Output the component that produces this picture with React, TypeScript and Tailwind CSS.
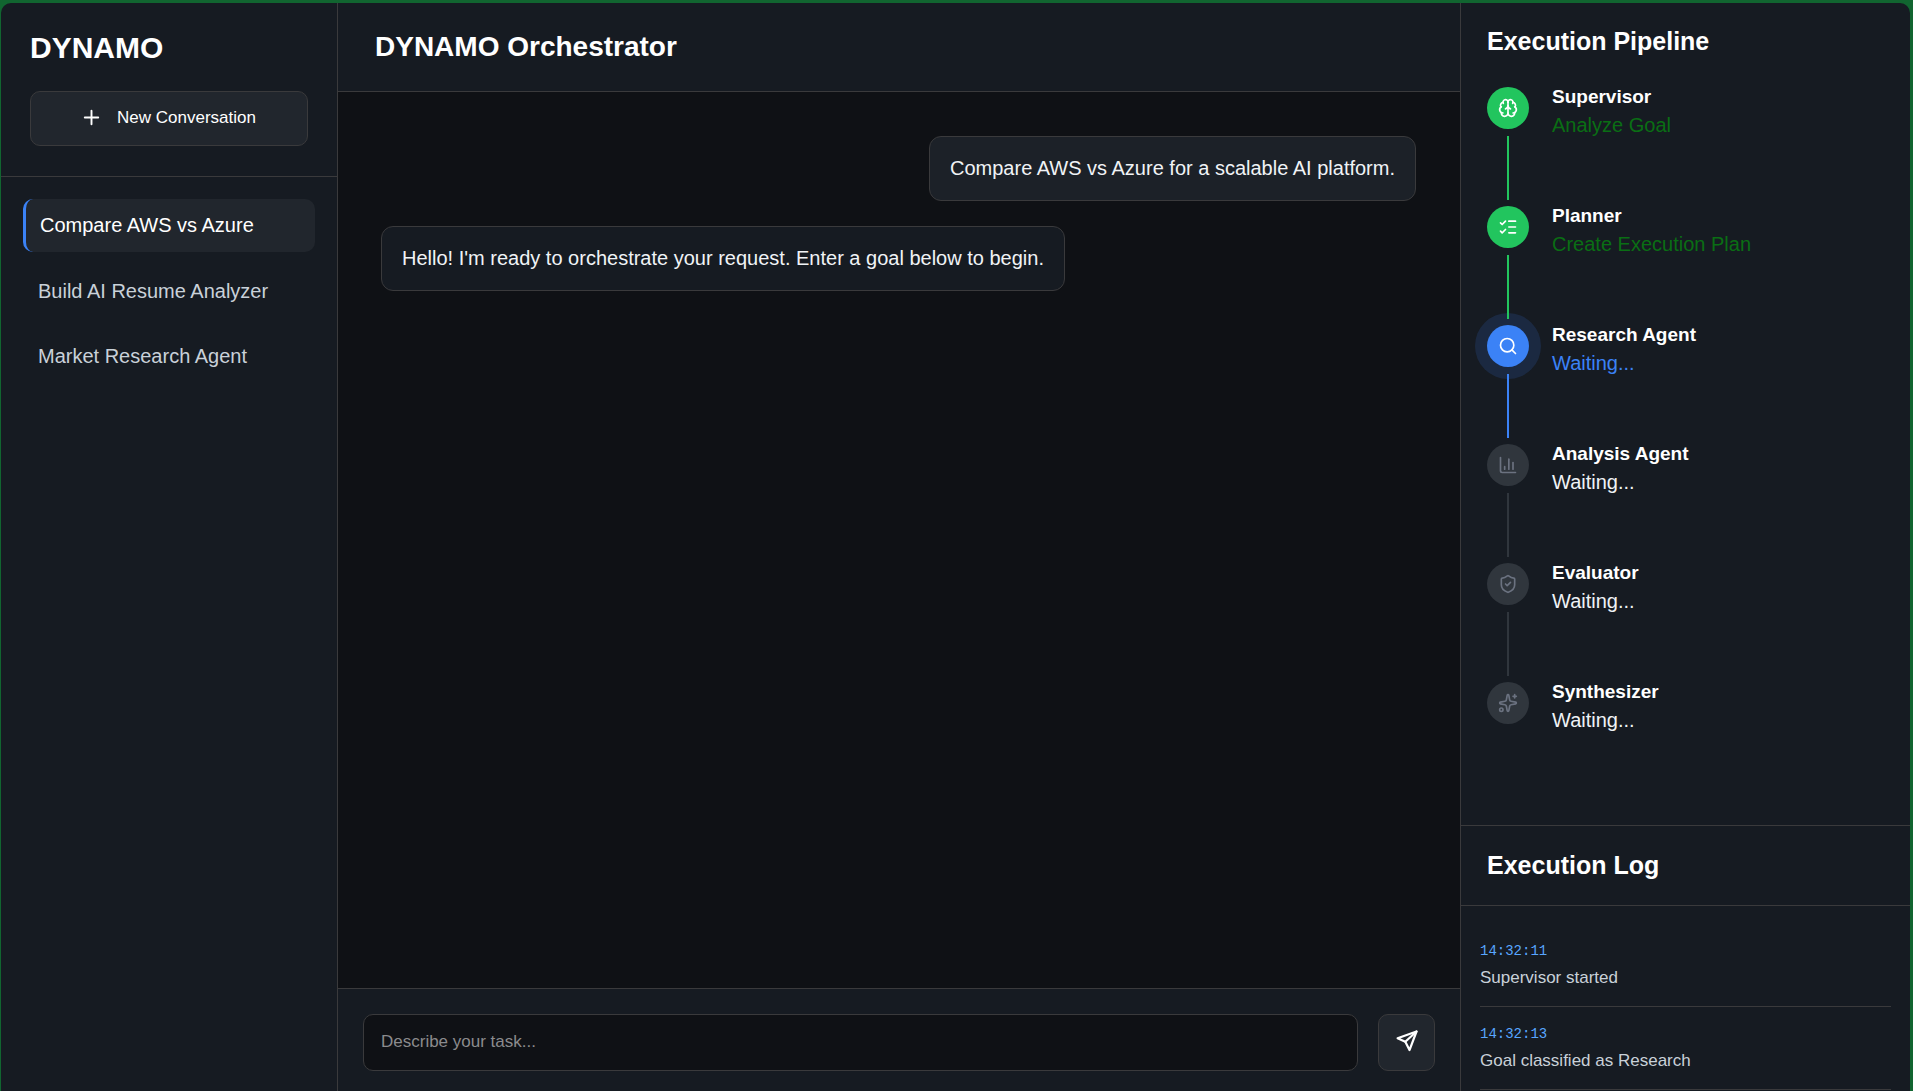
import { Brain, ChartColumn, ListChecks, Plus, Search, ShieldCheck, Sparkles } from "lucide-react";
import type { LucideIcon } from "lucide-react";

const conversations = ["Compare AWS vs Azure", "Build AI Resume Analyzer", "Market Research Agent"];

type State = "done" | "active" | "idle";

const steps: { name: string; status: string; state: State; icon: LucideIcon }[] = [
  { name: "Supervisor", status: "Analyze Goal", state: "done", icon: Brain },
  { name: "Planner", status: "Create Execution Plan", state: "done", icon: ListChecks },
  { name: "Research Agent", status: "Waiting...", state: "active", icon: Search },
  { name: "Analysis Agent", status: "Waiting...", state: "idle", icon: ChartColumn },
  { name: "Evaluator", status: "Waiting...", state: "idle", icon: ShieldCheck },
  { name: "Synthesizer", status: "Waiting...", state: "idle", icon: Sparkles },
];

const circleStyle: Record<State, string> = {
  done: "bg-[#22c55e] text-white",
  active: "bg-[#3b82f6] text-white shadow-[0_0_0_12px_rgba(59,130,246,0.15)]",
  idle: "bg-[#30363d] text-[#6b7280]",
};

const lineStyle: Record<State, string> = {
  done: "bg-[#22c55e]",
  active: "bg-[#3b82f6]",
  idle: "bg-[#30363d]",
};

const statusStyle: Record<State, string> = {
  done: "text-[#0a6e14]",
  active: "text-[#3b82f6]",
  idle: "text-[#f0f3f6]",
};

const logs = [
  { time: "14:32:11", text: "Supervisor started" },
  { time: "14:32:13", text: "Goal classified as Research" },
];

function PaperPlane() {
  return (
    <svg
      width="24"
      height="24"
      viewBox="0 0 24 24"
      fill="none"
      stroke="currentColor"
      strokeWidth="2.2"
      strokeLinecap="round"
      strokeLinejoin="round"
      aria-hidden="true"
    >
      <path d="M21.5 2.5 2.6 9.2l7.7 3.5 4.2 8.4z" />
      <path d="M10.3 12.7 21.5 2.5" />
    </svg>
  );
}

function Sidebar() {
  return (
    <aside className="flex flex-col border-r border-[#3a3a3c] bg-[#161b22]">
      <div className="border-b border-[#3a3a3c] px-[29px] pt-[27px] pb-[30px]">
        <h1 className="text-[30px] leading-9 font-bold text-white">DYNAMO</h1>
        <button
          type="button"
          className="mt-[25px] flex h-[55px] w-full items-center justify-center gap-[14px] rounded-[10px] border border-[#3a3a3c] bg-[#21262d] pr-[2px] pb-[2px] text-[17px] text-white"
        >
          <Plus size={23} strokeWidth={2} />
          <span>New Conversation</span>
        </button>
      </div>
      <nav className="flex flex-col gap-3 px-[22px] pt-[22px]">
        {conversations.map((title, i) => (
          <button
            key={title}
            type="button"
            className={
              i === 0
                ? "h-[53px] rounded-[10px] border-l-3 border-[#3b82f6] bg-[#21262d] pb-px pl-[14px] text-left text-xl text-white"
                : "h-[53px] rounded-[10px] pl-[15px] text-left text-xl text-[#c9d1d9]"
            }
          >
            {title}
          </button>
        ))}
      </nav>
    </aside>
  );
}

function Chat() {
  return (
    <main className="flex min-w-0 flex-col bg-[#0f1115]">
      <header className="h-[89px] shrink-0 border-b border-[#3a3a3c] bg-[#161b22] px-[37px] pt-[26px]">
        <h2 className="text-[28px] leading-9 font-bold text-white">DYNAMO Orchestrator</h2>
      </header>
      <section className="flex grow flex-col gap-[25px] px-[43px] pt-11 text-xl leading-[27px] text-[#f0f3f6]">
        <p className="mr-px self-end rounded-xl border border-[#3a3a3c] bg-[#1c2128] px-5 py-[18px]">
          Compare AWS vs Azure for a scalable AI platform.
        </p>
        <p className="self-start rounded-xl border border-[#3a3a3c] bg-[#161b22] px-5 py-[18px]">
          Hello! I'm ready to orchestrate your request. Enter a goal below to begin.
        </p>
      </section>
      <form
        className="flex gap-5 border-t border-[#3a3a3c] bg-[#161b22] px-[25px] pt-[25px] pb-5"
        onSubmit={(e) => e.preventDefault()}
      >
        <input
          type="text"
          aria-label="Task description"
          placeholder="Describe your task..."
          className="h-[57px] min-w-0 grow rounded-[10px] border border-[#3a3a3c] bg-[#0f1115] px-[17px] pb-[2px] text-[17px] text-white outline-none placeholder:text-[#8b8b8d]"
        />
        <button
          type="submit"
          aria-label="Send"
          className="flex size-[57px] shrink-0 items-center justify-center rounded-[10px] border border-[#3a3a3c] bg-[#21262d] pb-1 text-white"
        >
          <PaperPlane />
        </button>
      </form>
    </main>
  );
}

function Pipeline() {
  return (
    <section className="px-[26px] pt-[22px]">
      <h2 className="text-[25px] leading-8 font-bold text-white">Execution Pipeline</h2>
      <ol className="mt-[30px]">
        {steps.map(({ name, status, state, icon: Icon }, i) => (
          <li key={name} className="flex gap-[23px]">
            <div className="flex flex-col items-center">
              <div className={`flex size-[42px] items-center justify-center rounded-full ${circleStyle[state]}`}>
                <Icon size={20} strokeWidth={2} />
              </div>
              {i < steps.length - 1 && <div className={`relative z-10 mt-[7px] mb-[6px] h-16 w-[2px] ${lineStyle[state]}`} />}
            </div>
            <div className="-mt-1">
              <h3 className="text-[19px] leading-7 font-bold text-white">{name}</h3>
              <p className={`text-xl leading-7 ${statusStyle[state]}`}>{status}</p>
            </div>
          </li>
        ))}
      </ol>
    </section>
  );
}

function Log() {
  return (
    <section className="h-[266px] shrink-0 overflow-hidden border-t border-[#3a3a3c]">
      <header className="border-b border-[#3a3a3c] px-[26px] pt-[23px] pb-6">
        <h2 className="text-[25px] leading-8 font-bold text-white">Execution Log</h2>
      </header>
      <ul className="px-[19px] pt-[18px]">
        {logs.map((log) => (
          <li key={log.time} className="border-b border-[#3a3a3c] pt-[17px] pb-4">
            <time className="block font-['Liberation_Mono',monospace] text-sm leading-5 text-[#58a6ff]">{log.time}</time>
            <p className="mt-[5px] text-[17px] leading-6 text-[#c9d1d9]">{log.text}</p>
          </li>
        ))}
      </ul>
    </section>
  );
}

export default function App() {
  return (
    <div className="h-screen bg-[#116530] pt-[3px] pr-[3px] pl-px font-['Liberation_Sans',Arial,sans-serif]">
      <div className="grid h-full grid-cols-[337px_1fr_450px] overflow-hidden rounded-t-[10px]">
        <Sidebar />
        <Chat />
        <aside className="flex min-h-0 flex-col justify-between border-l border-[#3a3a3c] bg-[#161b22]">
          <Pipeline />
          <Log />
        </aside>
      </div>
    </div>
  );
}
